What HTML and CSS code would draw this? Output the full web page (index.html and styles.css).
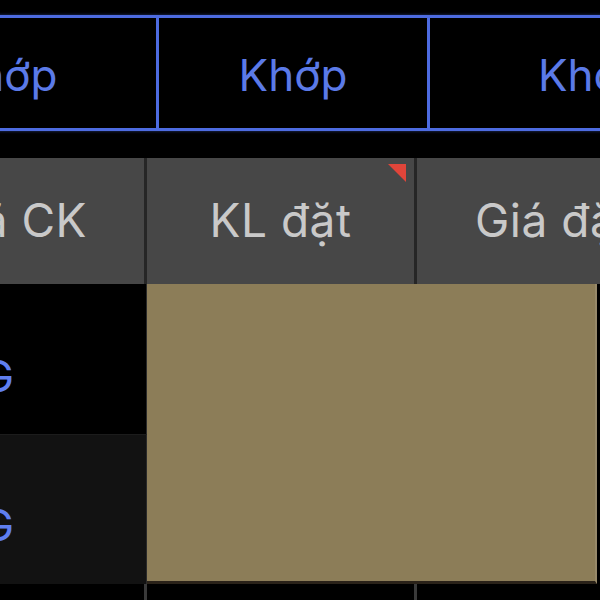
FILE: index.html
```html
<!DOCTYPE html>
<html lang="vi">
<head>
<meta charset="utf-8">
<link rel="stylesheet" href="styles.css">
</head>
<body>
<div class="screen">
  <div class="tabs">
    <div class="tab tab-first">Khớp</div>
    <div class="tab tab-mid">Khớp</div>
    <div class="tab tab-last">Khớp</div>
  </div>
  <div class="table">
    <div class="hcell c1">Mã CK</div>
    <div class="hcell c2">KL đặt<span class="flag"></span></div>
    <div class="hcell c3">Giá đặt</div>
    <div class="code r1">HAG</div>
    <div class="code r2">HAG</div>
    <div class="overlay"></div>
    <div class="foot f1"></div>
    <div class="foot f2"></div>
    <div class="foot f3"></div>
  </div>
</div>
</body>
</html>
```

FILE: styles.css
```css
html, body {
  margin: 0;
  padding: 0;
  background: #000;
}
.screen {
  width: 600px;
  height: 600px;
  overflow: hidden;
  background: #000;
  font-family: Inter, "Liberation Sans", sans-serif;
}
.tabs {
  display: flex;
  margin-top: 15px;
  margin-left: -150px;
  width: 900px;
  height: 110px;
  border-top: 3px solid #4d6be0;
  border-bottom: 3px solid #4d6be0;
  box-shadow: 0 0 3px rgba(77, 107, 224, 0.5);
}
.tab {
  display: flex;
  align-items: center;
  justify-content: center;
  color: #5b7ae8;
  font-size: 44px;
  padding-top: 4px;
  box-sizing: border-box;
  white-space: nowrap;
}
.tab-first {
  width: 309px;
  border-right: 3px solid #4d6be0;
}
.tab-mid {
  width: 271px;
  border-right: 3px solid #4d6be0;
}
.tab-last {
  flex: 1;
  justify-content: flex-start;
  padding-left: 108px;
}
.table {
  display: grid;
  grid-template-columns: 268px 270px 183px;
  grid-template-rows: 126px 150px 150px 30px;
  margin-top: 27px;
  margin-left: -121px;
  width: 721px;
}
.hcell {
  background: #474747;
  color: #c9c9c9;
  font-size: 46px;
  letter-spacing: 0.5px;
  display: flex;
  align-items: center;
  justify-content: center;
  position: relative;
  padding-bottom: 2px;
  box-sizing: border-box;
  white-space: nowrap;
  overflow: hidden;
}
.c1, .c2 {
  border-right: 3px solid #262626;
}
.c1 {
  justify-content: flex-end;
  padding-right: 57px;
}
.c3 {
  justify-content: flex-start;
  padding-left: 58px;
}
.flag {
  position: absolute;
  top: 6px;
  right: 8px;
  width: 0;
  height: 0;
  border-top: 18px solid #e0453a;
  border-left: 18px solid transparent;
}
.code {
  grid-column: 1;
  color: #5f7ff0;
  font-size: 44px;
  display: flex;
  align-items: center;
  justify-content: flex-end;
  padding-right: 132px;
  box-sizing: border-box;
  border-right: 1px solid #2a2a2a;
  white-space: nowrap;
}
.r1 {
  grid-row: 2;
  background: #000;
  padding-top: 34px;
}
.r2 {
  grid-row: 3;
  background: #121212;
  border-top: 1px solid #1c1c1c;
  padding-top: 30px;
}
.overlay {
  grid-column: 2 / 4;
  grid-row: 2 / 4;
  background: #8c7d58;
  border-right: 2px solid #97896a;
  border-bottom: 3px solid #2a2219;
  margin-right: 3px;
}
.foot {
  grid-row: 4;
  background: #000;
}
.f1, .f2 {
  border-right: 3px solid #3a3a3a;
}
```
